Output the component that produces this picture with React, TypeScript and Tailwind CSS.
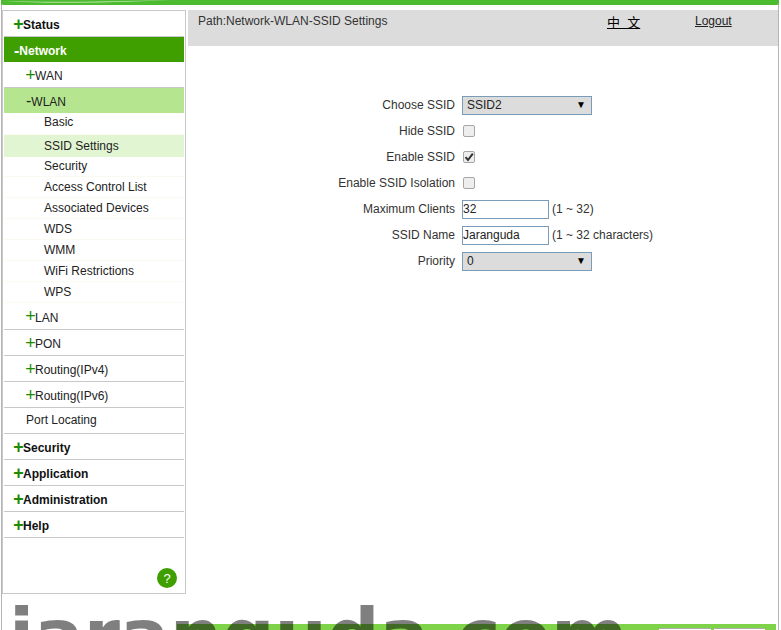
import React from "react";

const font = { fontFamily: '"Liberation Sans", "Noto Sans CJK SC", sans-serif' };

type Row = {
  label: string;
  kind: "top" | "topOpen" | "sub" | "subOpen" | "leaf" | "leafOn" | "plain";
  h: string;
  sign?: "+" | "-";
};

const menu: Row[] = [
  { label: "Status", kind: "top", h: "h-[26px]", sign: "+" },
  { label: "Network", kind: "topOpen", h: "h-[25px]", sign: "-" },
  { label: "WAN", kind: "sub", h: "h-[26px]", sign: "+" },
  { label: "WLAN", kind: "subOpen", h: "h-[25px]", sign: "-" },
  { label: "Basic", kind: "leaf", h: "h-[22px] pb-[4px]" },
  { label: "SSID Settings", kind: "leafOn", h: "h-[22px]" },
  { label: "Security", kind: "leaf", h: "h-[20px] pb-[1px]" },
  { label: "Access Control List", kind: "leaf", h: "h-[21px]" },
  { label: "Associated Devices", kind: "leaf", h: "h-[21px]" },
  { label: "WDS", kind: "leaf", h: "h-[21px]" },
  { label: "WMM", kind: "leaf", h: "h-[21px]" },
  { label: "WiFi Restrictions", kind: "leaf", h: "h-[21px]" },
  { label: "WPS", kind: "leaf", h: "h-[21px]" },
  { label: "LAN", kind: "sub", h: "h-[27px]", sign: "+" },
  { label: "PON", kind: "sub", h: "h-[26px]", sign: "+" },
  { label: "Routing(IPv4)", kind: "sub", h: "h-[26px]", sign: "+" },
  { label: "Routing(IPv6)", kind: "sub", h: "h-[26px]", sign: "+" },
  { label: "Port Locating", kind: "plain", h: "h-[26px] pb-[1px]" },
  { label: "Security", kind: "top", h: "h-[26px]", sign: "+" },
  { label: "Application", kind: "top", h: "h-[26px]", sign: "+" },
  { label: "Administration", kind: "top", h: "h-[26px]", sign: "+" },
  { label: "Help", kind: "top", h: "h-[26px]", sign: "+" },
];

const kindClass = {
  top: "pl-[10px] pt-[3px] font-bold text-[#111] border-b border-[#c8c8c8]",
  topOpen: "pl-[10px] pt-[3px] font-bold text-white bg-[#3f9e00]",
  sub: "pl-[22px] pt-[3px] text-[#222] border-b border-[#c8c8c8]",
  subOpen: "pl-[22px] pt-[2px] text-[#222] bg-[#b5e68f]",
  leaf: "pl-[40px] text-[#222] border-b border-[#fafaf0]",
  leafOn: "pl-[40px] text-[#222] bg-[#e2f5d3]",
  plain: "pl-[22px] text-[#222] border-b border-[#c8c8c8]",
};

const MenuRow = ({ row }: { row: Row }) => (
  <div className={`flex items-center text-[12px] ${row.h} ${kindClass[row.kind]}`}>
    {row.sign === "+" && (
      <span className="text-[18px] leading-none text-[#1c8c00] -mt-[3px] w-[9px] flex justify-center">+</span>
    )}
    {row.sign === "-" && <span className="text-[16px] leading-none -mt-[1px]">-</span>}
    <span>{row.label}</span>
  </div>
);

const Sidebar = () => (
  <aside className="w-[184px] h-[584px] mt-[5px] border border-[#c8c8c8] px-px flex flex-col shrink-0">
    {menu.map((row, i) => (
      <MenuRow key={i} row={row} />
    ))}
    <div className="mt-auto self-end mr-[7px] mb-[5px] w-[20px] h-[20px] rounded-full bg-[#3f9e00] text-white text-[13px] leading-none flex items-center justify-center">
      ?
    </div>
  </aside>
);

const FormRow = ({ label, children }: { label: string; children: React.ReactNode }) => (
  <div className="h-[26px] flex items-center">
    <label className="w-[267px] text-right text-[12px] text-[#333]">{label}</label>
    <div className="ml-[7px] flex items-center text-[12px] text-[#333]">{children}</div>
  </div>
);

const SelectBox = ({ value }: { value: string }) => (
  <div className="w-[130px] h-[19px] border border-[#7a9cb8] bg-[#dcdcdc] flex items-center justify-between pl-[4px] pr-[5px] text-[12px] text-[#222]">
    <span>{value}</span>
    <span className="text-[10px] leading-none text-black">▼</span>
  </div>
);

const TextBox = ({ value }: { value: string }) => (
  <input
    readOnly
    value={value}
    className="w-[87px] h-[19px] border border-[#7a9cb8] bg-white text-[12px] text-[#222] outline-none"
    style={font}
  />
);

const Check = ({ on }: { on?: boolean }) => (
  <span className="w-[12px] h-[12px] ml-px rounded-[2px] border border-[#a6a6a6] bg-[#eeeeee] flex items-center justify-center">
    {on && (
      <svg width="10" height="10" viewBox="0 0 10 10">
        <path d="M1.5 5.2 L4 8 L8.8 1.6" fill="none" stroke="#333" strokeWidth="2" />
      </svg>
    )}
  </span>
);

export default function App() {
  return (
    <div className="relative h-[630px] overflow-hidden bg-white" style={font}>
      <div className="ml-px w-[778px] h-[630px] border-x border-[#b4b4b4] flex flex-col relative">
        <div className="relative -mx-px h-[5px] bg-[#4dbb2f] rounded-b-[2px] overflow-hidden shrink-0">
          <svg className="absolute left-0 top-0" width="180" height="5" viewBox="0 0 180 5">
            <path d="M2 1 Q60 5 170 0 Q60 3 2 1 Z" fill="#b8e0a8" />
          </svg>
        </div>
        <div className="flex gap-[2px]">
          <Sidebar />
          <main className="flex-1 mt-[5px]">
            <header className="h-[36px] bg-[#dcdcdc] flex items-start pt-[4px] text-[12px]">
              <div className="flex-1 pl-[10px] text-[#333] leading-[15px]">Path:Network-WLAN-SSID Settings</div>
              <a className="w-[88px] mt-[1px] underline text-black text-[13px] leading-[15px]">中&nbsp;&nbsp;文</a>
              <a className="w-[83px] underline text-[#222] leading-[15px]">Logout</a>
            </header>
            <form className="pt-[46px]">
              <FormRow label="Choose SSID">
                <SelectBox value="SSID2" />
              </FormRow>
              <FormRow label="Hide SSID">
                <Check />
              </FormRow>
              <FormRow label="Enable SSID">
                <Check on />
              </FormRow>
              <FormRow label="Enable SSID Isolation">
                <Check />
              </FormRow>
              <FormRow label="Maximum Clients">
                <TextBox value="32" />
                <span className="ml-[3px]">(1 ~ 32)</span>
              </FormRow>
              <FormRow label="SSID Name">
                <TextBox value="Jaranguda" />
                <span className="ml-[3px]">(1 ~ 32 characters)</span>
              </FormRow>
              <FormRow label="Priority">
                <SelectBox value="0" />
              </FormRow>
            </form>
          </main>
        </div>
        <footer className="absolute left-[175px] top-[624px] w-[599px] h-[6px] bg-[#7ed348] flex justify-end pt-[4px] pr-[11px] gap-[3px]">
          <div className="w-[52px] h-[2px] bg-white border-t border-[#aaaaaa]" />
          <div className="w-[51px] h-[2px] bg-white border-t border-[#aaaaaa]" />
        </footer>
      </div>
      <div
        className="absolute left-[9px] top-[599px] text-[73.5px] leading-none font-bold text-black/50 whitespace-nowrap"
        style={{ fontFamily: '"DejaVu Sans", sans-serif' }}
      >
        jaranguda.com
      </div>
    </div>
  );
}
